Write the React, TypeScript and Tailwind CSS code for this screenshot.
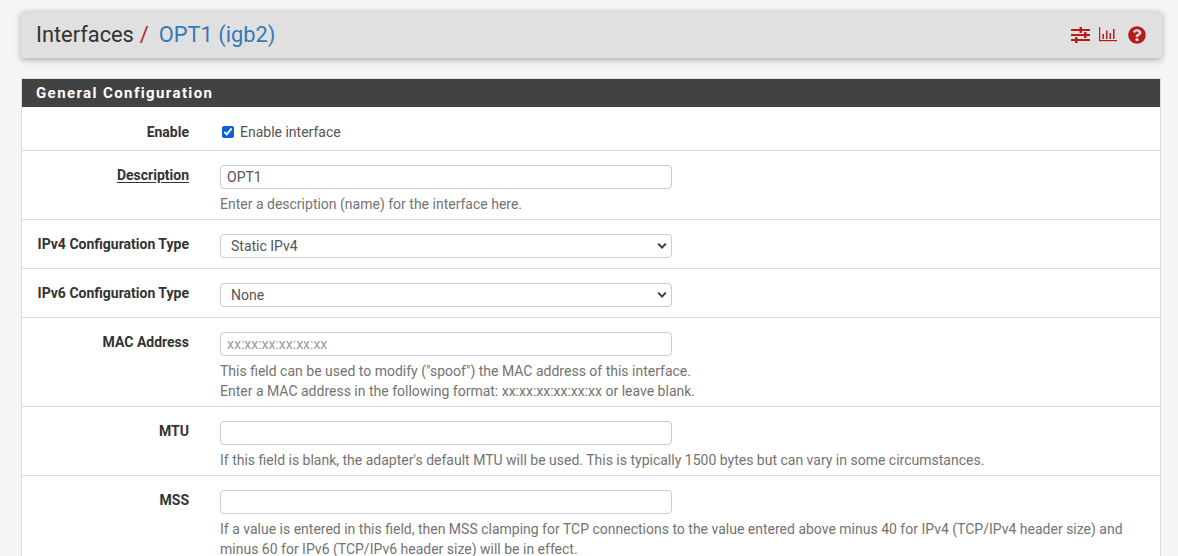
import React from "react";
import { FaQuestionCircle } from "react-icons/fa";

const font = "[font-family:Roboto,sans-serif]";

function Row({ label, underline, children, h }: { label: string; underline?: boolean; children: React.ReactNode; h: string }) {
  return (
    <div className={`flex border-b border-[#dddddd] bg-white ${h}`}>
      <div className="w-[167px] shrink-0 pt-[14px] text-right text-[14px] leading-[20px] font-bold text-[#333333]">
        {underline ? <span className="underline underline-offset-2">{label}</span> : label}
      </div>
      <div className="ml-[31px] flex w-[930px] flex-col">{children}</div>
    </div>
  );
}

function Help({ children }: { children: React.ReactNode }) {
  return <div className="text-[14px] leading-[20px] text-[#737373]">{children}</div>;
}

function TextInput({ value, placeholder }: { value?: string; placeholder?: string }) {
  return (
    <input
      readOnly
      value={value ?? ""}
      placeholder={placeholder}
      className="block h-[24px] w-[452px] rounded-[4px] border border-[#cccccc] bg-white px-[6px] text-[14px] text-[#555555] outline-none placeholder:text-[#999999]"
    />
  );
}

function SelectBox({ value }: { value: string }) {
  return (
    <div className="relative w-[452px]">
      <select
        defaultValue={value}
        className="block h-[24px] w-full appearance-none rounded-[4px] border border-[#cccccc] bg-white px-[10px] text-[14px] text-[#555555] outline-none"
      >
        <option>{value}</option>
      </select>
      <svg className="pointer-events-none absolute right-[5px] top-[8px]" width="10" height="8" viewBox="0 0 10 8" fill="none">
        <path d="M1.2 1.6 L5 5.6 L8.8 1.6" stroke="#3a3a3a" strokeWidth="2" />
      </svg>
    </div>
  );
}

export default function App() {
  return (
    <div className={`h-[556px] w-[1178px] overflow-hidden bg-[#f5f5f5] ${font}`}>
      <div className="px-[21px] pt-[11px]">
        <div className="flex h-[47px] w-[1141px] items-center justify-between rounded-[3px] bg-[#e0e0e0] pl-[15px] pr-[16px] shadow-[0_2px_6px_rgba(0,0,0,0.3)]">
          <div className="flex items-baseline text-[21.8px] leading-[30px]">
            <span className="text-[#333333]">Interfaces</span>
            <span className="ml-[6px] text-[#b71c1c]">/</span>
            <span className="ml-[10px] text-[#337ab7]">OPT1 (igb2)</span>
          </div>
          <div className="flex items-center text-[#b71c1c]">
            <svg width="19" height="16" viewBox="0 0 19 16" fill="#b71c1c">
              <rect x="0" y="2" width="19" height="2" />
              <rect x="8.5" y="0" width="2.5" height="6" rx="0.5" />
              <rect x="0" y="7" width="19" height="2" />
              <rect x="13" y="5" width="2.5" height="6" rx="0.5" />
              <rect x="0" y="12" width="19" height="2" />
              <rect x="4" y="10" width="2.5" height="6" rx="0.5" />
            </svg>
            <svg className="ml-[9px]" width="18" height="15" viewBox="0 0 18 15" fill="#b71c1c">
              <rect x="0" y="0" width="1.2" height="14" />
              <rect x="0" y="13" width="18" height="1.2" />
              <rect x="3.5" y="7" width="1.5" height="5" />
              <rect x="7" y="3.5" width="1.5" height="8.5" />
              <rect x="10.5" y="6" width="1.5" height="6" />
              <rect x="14" y="2" width="1.5" height="10" />
            </svg>
            <FaQuestionCircle className="ml-[11px]" size={18} />
          </div>
        </div>

        <div className="mt-[20px] w-[1140px] border-x border-t border-[#dddddd]">
          <div className="flex h-[28px] items-center bg-[#424242] pl-[14px] text-[15px] font-bold tracking-[1.4px] text-white">
            General Configuration
          </div>
          <div className="flex h-[44px] border-b border-[#dddddd] bg-white">
            <div className="w-[167px] shrink-0 pt-[15px] text-right text-[14px] leading-[20px] font-bold text-[#333333]">Enable</div>
            <div className="ml-[33px] mt-[15px] flex h-[20px] items-center gap-[6px] self-start text-[14px] text-[#555555]">
              <input type="checkbox" defaultChecked className="m-0 h-[12px] w-[12px] accent-[#0b62d6]" />
              <span>Enable interface</span>
            </div>
          </div>
          <Row label="Description" underline h="h-[69px]">
            <div className="mt-[14px]"><TextInput value="OPT1" /></div>
            <div className="mt-[5px]"><Help>Enter a description (name) for the interface here.</Help></div>
          </Row>
          <Row label="IPv4 Configuration Type" h="h-[49px]">
            <div className="mt-[14px]"><SelectBox value="Static IPv4" /></div>
          </Row>
          <Row label="IPv6 Configuration Type" h="h-[49px]">
            <div className="mt-[14px]"><SelectBox value="None" /></div>
          </Row>
          <Row label="MAC Address" h="h-[89px]">
            <div className="mt-[14px]"><TextInput placeholder="xx:xx:xx:xx:xx:xx" /></div>
            <div className="mt-[5px]">
              <Help>This field can be used to modify ("spoof") the MAC address of this interface.</Help>
              <Help>Enter a MAC address in the following format: xx:xx:xx:xx:xx:xx or leave blank.</Help>
            </div>
          </Row>
          <Row label="MTU" h="h-[69px]">
            <div className="mt-[14px]"><TextInput /></div>
            <div className="mt-[5px]"><Help>If this field is blank, the adapter's default MTU will be used. This is typically 1500 bytes but can vary in some circumstances.</Help></div>
          </Row>
          <Row label="MSS" h="h-[89px]">
            <div className="mt-[14px]"><TextInput /></div>
            <div className="mt-[5px]">
              <Help>If a value is entered in this field, then MSS clamping for TCP connections to the value entered above minus 40 for IPv4 (TCP/IPv4 header size) and minus 60 for IPv6 (TCP/IPv6 header size) will be in effect.</Help>
            </div>
          </Row>
        </div>
      </div>
    </div>
  );
}
